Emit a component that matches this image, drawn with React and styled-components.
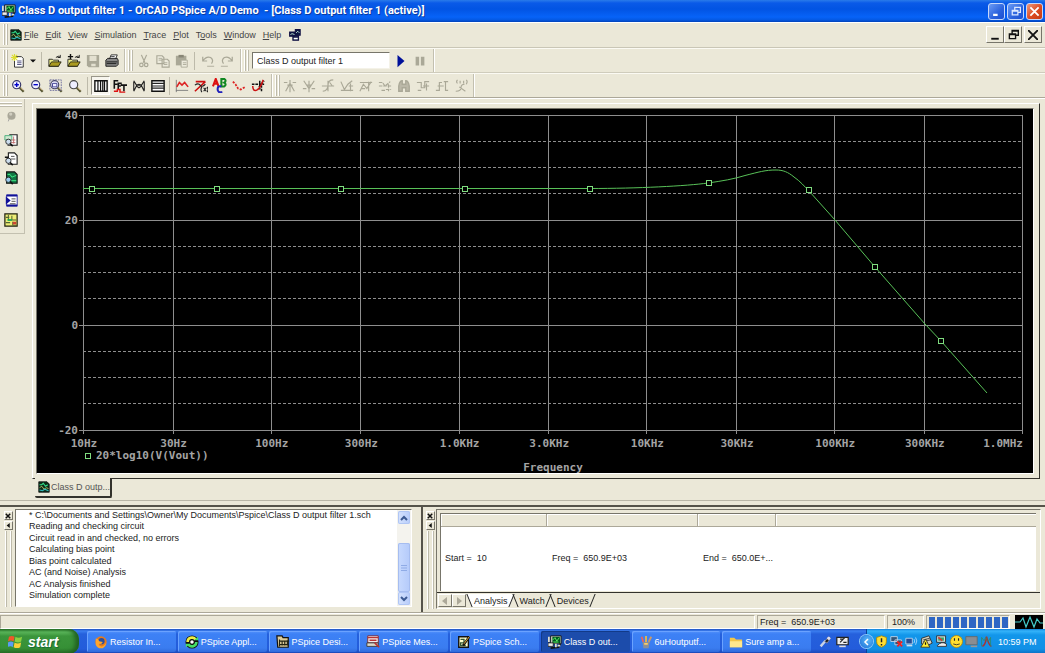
import React from 'react';
import styled, { createGlobalStyle, css } from 'styled-components';

const face = '#ebe8d8';
const shade = '#aca899';
const ink = '#222';
const sans = '"Liberation Sans", Arial, sans-serif';

const GlobalStyle = createGlobalStyle`
  * { box-sizing: border-box; }
  body { margin: 0; background: ${face}; font: 9px/12px ${sans}; color: ${ink}; }
  button { font: inherit; color: inherit; border: 0; padding: 0; background: none; }
  ul { list-style: none; margin: 0; padding: 0; }
`;

const Desktop = styled.div`
  display: flex;
  flex-direction: column;
  min-height: 100vh;
  overflow: hidden;
`;

const Svg = styled.svg`
  display: block;
  flex: none;
  width: ${p => p.$size || 13}px;
  height: ${p => p.$size || 13}px;
`;

const Icon = ({ size, children }) => (
  <Svg $size={size} viewBox="0 0 16 16" fill="none" aria-hidden="true">{children}</Svg>
);

/* ---------- icons ---------- */
const AppArt = () => (
  <>
    <path d="M3 1h12v9H3z" fill="#d8d8c8" stroke="#111" />
    <path d="M5 2h9v7H5z" fill="#052" />
    <path d="M5 6l3-3 2 4 3-4M6 8h6" stroke="#6f6" />
    <path d="M0 9h6v4H0z" fill="#eee" stroke="#222" />
    <path d="M3 15l9-1 2-4" stroke="#111" strokeWidth="2" />
    <path d="M1 2v6M9 10v4M11 12h3" stroke="#ddc" strokeWidth="2" />
  </>
);
const ScopeArt = () => (
  <>
    <path d="M1 1h11l3 3v11H1z" fill="#0b2d18" stroke="#111" />
    <path d="M2 5h3l2-2 3 4 3-2" stroke="#3d8" strokeWidth="1.5" />
    <path d="M2 9l3-2 3 4 3-2 3 1" stroke="#dd7" />
    <path d="M2 12l4 1 3-2 5 2" stroke="#3bb" strokeWidth="1.5" />
  </>
);
const Lens = ({ children, dim }) => (
  <>
    <circle cx="6.5" cy="6.5" r="4.6" fill="#eef" stroke={dim || '#336'} strokeWidth="1.3" />
    <path d="M10 10l4.5 4.5" stroke="#553" strokeWidth="2.6" />
    <path d="M11 10l3 3" stroke="#db8" />
    {children}
  </>
);
const Folder = () => (
  <>
    <path d="M1 6h4l1 1h6v7H1z" fill="#ee8" stroke="#222" />
    <path d="M1 14l3-5h11l-3 5z" fill="#aa9a20" stroke="#221" />
    <path d="M9 4q3-3 5 0M14 1v3h-3" stroke="#111" />
  </>
);
const g = '#aaa897';

const art = {
  newDoc: <><path d="M4 3h8l2 2v10H4z" fill="#fff" stroke="#222" /><path d="M7 8h5M7 10h5M7 12h5" stroke="#447" /><path d="M4 0v8M0 4h8M1 1l6 6M7 1L1 7" stroke="#dd3" strokeWidth="1.3" /></>,
  open: <Folder />,
  append: <><Folder /><path d="M4 0v6M1 3h6" stroke="#111" strokeWidth="1.6" /></>,
  save: <><path d="M1 1h14v14H3l-2-2z" fill={g} /><path d="M4 2h8v6H4zM6 11h5v3H6z" fill="#e3e0d0" /></>,
  print: <><path d="M5 6l2-5h7l-2 5" fill="#fff" stroke="#222" /><path d="M1 7l2-2h11l1 2v5l-2 2H1z" fill="#888" stroke="#111" /><path d="M2 9h12M2 11h11" stroke="#111" /><path d="M7 3h4" stroke="#222" /></>,
  cut: <><path d="M5 1l4 9M11 1L7 10" stroke={g} strokeWidth="1.4" /><circle cx="5" cy="12.5" r="2" stroke={g} strokeWidth="1.4" /><circle cx="10.5" cy="12.5" r="2" stroke={g} strokeWidth="1.4" /></>,
  copy: <><path d="M1 2h6l2 2v7H1zM7 6h6l2 2v7H7z" fill="#eceadc" stroke={g} strokeWidth="1.3" /><path d="M3 5h4M3 7h4M9 10h4M9 12h4" stroke={g} /></>,
  paste: <><path d="M1 2h12v11H1z" fill={g} /><path d="M4 1h6v3H4z" fill="#888676" /><path d="M7 7h7v8H7z" fill="#eceadc" stroke={g} /><path d="M9 10h4M9 12h4" stroke={g} /></>,
  undo: <><path d="M2 3v5h5M2 8q4-6 9-4 4 3 1 7" stroke={g} strokeWidth="1.4" /><path d="M7 14h8" stroke={g} /></>,
  redo: <><path d="M14 3v5H9M14 8q-4-6-9-4-4 3-1 7" stroke={g} strokeWidth="1.4" /><path d="M1 14h8" stroke={g} /></>,
  play: <path d="M4 1l8 7-8 7z" fill="#00109a" />,
  pause: <path d="M3 3h4v10H3zM9 3h4v10H9z" fill={g} />,
  zoomIn: <Lens><path d="M4 6.5h5M6.5 4v5" stroke="#00c" strokeWidth="1.6" /></Lens>,
  zoomOut: <Lens><path d="M4 6.5h5" stroke="#00c" strokeWidth="1.6" /></Lens>,
  zoomArea: <><Lens dim="#446"><path d="M4 5h5v4H4z" stroke="#338" /></Lens><path d="M1 1h13v12H1z" stroke="#669" strokeDasharray="2 1" /></>,
  zoomFit: <Lens dim="#444" />,
  logX: <><path d="M1 2h14v12H1z" fill="#fff" stroke="#111" strokeWidth="1.6" /><path d="M4.5 2v12M7.5 2v12M10 2v12M12 2v12" stroke="#111" strokeWidth="1.4" /></>,
  fft: <><path d="M1.5 11V2H6M1 6h4M6 12V5h4M6 8h3M9 7h7M12.5 7v7" stroke="#111" strokeWidth="1.8" /><path d="M1 14h4v-2h3v3h6" stroke="#d11" strokeWidth="1.6" /></>,
  perf: <><path d="M2 2l3 5 3-1 3 1 3-5M2 14l3-6 3 2 3-2 3 6M2 3v10M14 3v10M5 7h6" stroke="#222" strokeWidth="1.3" /></>,
  logY: <><path d="M1 2h14v12H1z" fill="#fff" stroke="#111" strokeWidth="1.6" /><path d="M1 5h14M1 8h14M1 10.5h14" stroke="#222" strokeWidth="1.4" /></>,
  trace: <><path d="M1.5 1v14M1 13h14" stroke="#777" /><path d="M2 9l3-5 3 3 3-3 4 5" stroke="#d22" strokeWidth="1.8" /></>,
  evalFn: <><path d="M2 3h11M1 14L13 3" stroke="#c11" strokeWidth="1.8" /><path d="M1 7q4-3 6 0t6-1M9 9q-2 3 0 6M11 10l3 4M14 10l-3 4M15 9q2 3 0 6" stroke="#222" strokeWidth="1.3" /></>,
  label: <><path d="M1 9l3-8 3 8M2 6h4" stroke="#d11" strokeWidth="2.2" /><path d="M10 1v8h3q3-2 0-4q3-2 0-4z" stroke="#182" strokeWidth="2.2" /><path d="M10 9q-4-1-4 3t5 3" stroke="#22b" strokeWidth="2.2" /></>,
  mark: <path d="M1 3l3 3 3 5 3 1 5-3" stroke="#d22" strokeWidth="2" strokeDasharray="2.5 1.5" />,
  cursor: <><path d="M1 6h14M10 2v10M9 9l6-7M12 7v7" stroke="#111" strokeWidth="1.7" strokeDasharray="3 1" /><path d="M2 8q0 6 4 5t8-12" stroke="#c11" strokeWidth="1.7" /></>,
  c1: <path d="M1 4h4M11 4h4M8 1v14M8 5L3 14M8 5l5 9M5 7h6" stroke={g} strokeWidth="1.3" />,
  c2: <path d="M2 2l6 9 6-9M8 2v13M1 11h4M11 11h4M5 7h6" stroke={g} strokeWidth="1.3" />,
  c3: <path d="M2 14q6-1 6-7t6-6M1 8h14M8 2v12M10 4l3 4" stroke={g} strokeWidth="1.3" />,
  c4: <path d="M1 3l4 9 4-6 5-4M1 13h14M12 5v9M10 8h5" stroke={g} strokeWidth="1.3" />,
  c5: <path d="M1 14l4-8 4 5 5-8M1 4h14M11 3v11M3 11h4" stroke={g} strokeWidth="1.3" />,
  c6: <path d="M1 4h4l3 4 6-5M1 8h14M4 13h4M12 6v8M9 12h6" stroke={g} strokeWidth="1.3" strokeDasharray="4 1" />,
  c7: <path d="M2 8q1-6 4-6v4h4V2q3 0 4 6v6h-4v-4H6v4H2z" stroke={g} fill="#bbb8a8" strokeWidth="1.5" />,
  c8: <path d="M1 4h5v6h4V3h5M8 8h7M12 5v8M2 13h4" stroke={g} strokeWidth="1.3" />,
  c9: <path d="M1 13h4V4h3M3 8h7M10 3h5M12 3v10h3" stroke={g} strokeWidth="1.3" />,
  c10: <path d="M4 1q-2 2 0 4M14 1q2 2 0 5M7 2v3M11 2v3M12 6q-4 0-4 4t-6 4M6 9l7 5" stroke={g} strokeWidth="1.3" />,
  pin: <><circle cx="8" cy="7" r="5" fill="#a9a799" /><circle cx="7" cy="5" r="2" fill="#d0cec0" /><path d="M5 11l-1 3" stroke="#999" /></>,
  view1: <><path d="M6 2h9v12H4" fill="#fff" stroke="#222" strokeWidth="1.3" /><path d="M1 3h8v5H1z" fill="#cfe8d0" stroke="#4a7" /><path d="M8 8h5M8 11h5M11 4v8" stroke="#b66" /><circle cx="5" cy="10" r="3" fill="#cde" stroke="#222" /><path d="M7 12l3 3" stroke="#111" strokeWidth="2" /></>,
  view2: <><path d="M5 1h7l3 3v10H5z" fill="#fff" stroke="#222" strokeWidth="1.3" /><path d="M8 5h4M8 8h5" stroke="#444" /><circle cx="5" cy="10" r="3" fill="#cde" stroke="#222" /><path d="M1 6h4M7 12l3 3" stroke="#111" strokeWidth="1.8" /></>,
  view3: <><path d="M3 1h9l3 3v10H3z" fill="#174" stroke="#111" strokeWidth="1.3" /><path d="M4 4h3l2 3 5-2M8 11h6" stroke="#4e8" /><circle cx="5" cy="10" r="3" fill="#9ce" stroke="#222" /><path d="M7 12l3 3" stroke="#111" strokeWidth="2" /></>,
  queue: <><path d="M2 1h13v14H2z" fill="#fff" stroke="#119" /><path d="M2 2h13M2 14h13" stroke="#119" strokeWidth="2" /><path d="M1 3l6 5-6 5z" fill="#119" /><path d="M8 6h5M8 9h5M6 12h7" stroke="#333" /></>,
  chip: <><path d="M1 1h14v14H1z" fill="#ee7" stroke="#221" strokeWidth="1.4" /><path d="M5 2v6M2 5h4M9 3v5h5M2 11h5M10 10v4h4" stroke="#563" strokeWidth="1.2" /><path d="M10 10h4v3h-4z" fill="#c43" /><path d="M4 8h5" stroke="#1a5" strokeWidth="2" /></>,
  windows: <><path d="M2 5h7v5H2zM9 2h6v7H9zM6 10h7v5H6z" fill="#0b1840" stroke="#114" strokeWidth="1.3" /><path d="M3 8l2-1 3 1M10 6l2-2 2 2" stroke="#dfe" /><path d="M7 13h5" stroke="#fff" strokeWidth="2" /></>,
  firefox: <><circle cx="8" cy="8" r="6.5" fill="#e77b1c" /><circle cx="8.5" cy="7" r="3.6" fill="#2a4fa0" /><path d="M2 4q3 0 4 3l4 1q-1 3-4 2-2 2 3 3 4-1 5-5 0 5-4 7-6 1-8-4z" fill="#ffa52b" /></>,
  recycle: <><circle cx="8" cy="8" r="7.5" fill="#111" /><path d="M3 8a5 5 0 019-3" stroke="#ee4" strokeWidth="3" /><path d="M13 8a5 5 0 01-9 3" stroke="#4d6" strokeWidth="3" /><path d="M10 6h5V2zM6 10H1v4z" fill="#4d6" /><circle cx="8" cy="8" r="2" fill="#fff" /></>,
  design: <><path d="M1 1h6l1 2h6v11H2z" fill="#dc9" stroke="#111" strokeWidth="1.4" /><path d="M4 7h11M4 11h10M4 5v8M7 7v5M10 7v5M13 6v6" stroke="#221" strokeWidth="1.3" /></>,
  message: <><path d="M2 1h12v8H2z" fill="#eee" stroke="#822" /><path d="M2 3h12M4 6h8" stroke="#b33" strokeWidth="1.6" /><path d="M1 9h13v4H1z" fill="#dcd8c8" stroke="#333" /><path d="M10 9l5 5" stroke="#b33" strokeWidth="2" /></>,
  sketch: <><path d="M2 2h11v12H2z" fill="#ffc" stroke="#111" strokeWidth="1.6" /><path d="M4 5h4v4H4v3h6" stroke="#353" strokeWidth="1.5" /><path d="M7 12l7-10" stroke="#111" strokeWidth="2.5" /><path d="M8 10l6-8" stroke="#fb3" /></>,
  brushes: <><path d="M4 8h8l-1 7H5z" fill="#8a8f99" /><path d="M5 8L3 2" stroke="#e65" strokeWidth="2" /><path d="M8 8V1" stroke="#eb4" strokeWidth="2" /><path d="M11 8l3-6" stroke="#c96" strokeWidth="2" /><path d="M6 10h4" stroke="#fc6" strokeWidth="2" /></>,
  folder: <><path d="M1 3h5l2 2h7v9H1z" fill="#f3c648" /><path d="M1 7h14v7H1z" fill="#ffe88d" /></>,
  pen: <><path d="M2 14l6-7" stroke="#c8d2e6" strokeWidth="3" /><path d="M7 8l5-6 2 2-4 6z" fill="#222" stroke="#99a" /><circle cx="12" cy="4" r="2" fill="#dde" /></>,
  tablet: <><path d="M1 3h14v9H1z" fill="#eee" stroke="#222" strokeWidth="1.5" /><path d="M5 9l6-6M5 5h4M9 9h4" stroke="#222" strokeWidth="1.5" /><path d="M4 14h8" stroke="#ddd" strokeWidth="2" /></>,
  shield: <><path d="M8 1l6 2v5q0 5-6 7-6-2-6-7V3z" fill="#fd3" stroke="#a80" /><path d="M8 4v5M8 11v2" stroke="#222" strokeWidth="1.8" /></>,
  netOff: <><path d="M1 2h8v6H1zM6 6h8v6H6z" fill="#357" stroke="#cde" /><path d="M9 8l6 6M15 8l-6 6" stroke="#e22" strokeWidth="2.2" /></>,
  netOn: <><path d="M1 4h8v7H1z" fill="#234e98" stroke="#cde" /><path d="M2 13h7" stroke="#cde" strokeWidth="2" /><path d="M11 5q2 2 0 5M13 3q3 4 0 9" stroke="#bdf" /></>,
  warn: <><path d="M2 4l9-3 4 9-6 3-7-2z" fill="#d8d4c0" stroke="#222" /><path d="M4 6l8-2M4 8l9-2" stroke="#333" /><path d="M7 5l5 10H1z" fill="#fe3" stroke="#332" /><path d="M6.8 9v3" stroke="#111" strokeWidth="1.5" /></>,
  screens: <><path d="M2 1h11v8H2z" fill="#cdd" stroke="#222" /><path d="M4 3h7v4H4z" fill="#3a6" /><path d="M4 3l5 4" stroke="#d33" strokeWidth="2" /><path d="M3 13q5-6 11-2v3H3z" fill="#eee" stroke="#222" /></>,
  smile: <><circle cx="8" cy="8" r="7.4" fill="#ffdf30" stroke="#b80" /><path d="M5.5 4v3M10.5 4v3" stroke="#222" strokeWidth="1.4" /><path d="M4 11q4 2 8 0" stroke="#222" /></>,
  monitor: <><path d="M1 2h14v10H1z" fill="#8a8d92" stroke="#666" /><path d="M7 14h8" stroke="#999" strokeWidth="2" /></>,
  scopeA: <><path d="M3 14q4-2 5-12 3 11 6 12" stroke="#a33" strokeWidth="1.8" /><path d="M2 14V3l3 4 2-4 3 5 3-5v11" stroke="#386" /></>,
};

/* ---------- title and menu ---------- */
const TitleBar = styled.header`
  display: flex;
  align-items: center;
  gap: 2px;
  height: 22px;
  padding: 0 2px;
  color: #fff;
  background: linear-gradient(#2a7bea 0, #0a5ae8 3px, #0254e3 9px, #0763f8 17px, #0458e2 20px, #0242b8 22px);
`;
const Title = styled.h1`
  flex: 1;
  margin: 0;
  font: bold 11px/20px Roboto, ${sans};
  white-space: pre;
  text-shadow: 1px 1px #0a3aa0;
`;
const Caption = styled.button`
  display: grid;
  place-items: center;
  width: 17px;
  height: 17px;
  border: 1px solid #c7d8fa;
  border-radius: 3px;
  background: ${p => (p.$close ? 'linear-gradient(135deg,#ee9a7c,#dc4a22 55%,#c43c14)' : 'linear-gradient(135deg,#6c9cf5,#2b62dd 60%,#1c4fd0)')};
`;
const Captions = styled.div`
  display: flex;
  gap: 2px;
`;
const MenuBar = styled.nav`
  display: flex;
  align-items: center;
  height: 26px;
  padding: 0 3px;
  border-bottom: 1px solid #c9c6b6;
  box-shadow: inset 0 1px #fff;
`;
const Menus = styled.div`
  display: flex;
  align-items: center;
  gap: 7px;
  flex: 1;
  margin-left: 2px;
`;
const MenuButton = styled.button`
  font: 9px/12px ${sans};
  color: #444;
`;
const MenuLead = styled.span`
  display: flex;
  align-items: center;
  gap: 2px;
`;
const ChildCaption = styled.button`
  display: grid;
  place-items: center;
  width: 18px;
  height: 17px;
  margin-left: ${p => (p.$gap ? 2 : 0)}px;
  border: 1px solid;
  border-color: #fff #77756a #77756a #fff;
`;

/* ---------- tool bars ---------- */
const ToolRow = styled.div`
  display: flex;
  height: 25px;
  border-top: 1px solid #fbfaf3;
  border-bottom: 1px solid ${p => (p.$last ? shade : '#cfccbc')};
`;
const Band = styled.div`
  display: flex;
  align-items: center;
  padding: 0 ${p => p.$end || 3}px 0 3px;
  border-right: 1px solid #c3c0b0;
  box-shadow: 1px 0 #fff;
`;
const Grip = styled.span`
  flex: none;
  width: 5px;
  height: 21px;
  margin-right: ${p => p.$gap || 0}px;
  background: linear-gradient(90deg, #fff 1px, #bdbaaa 1px 2px, transparent 2px 3px, #fff 3px 4px, #bdbaaa 4px);
`;
const Tool = styled.button`
  display: grid;
  place-items: center;
  width: ${p => p.$w || 19}px;
  height: 19px;
  ${p => p.$pressed && css`
    background: #f7f5ee;
    border: 1px solid;
    border-color: #99968a #fff #fff #99968a;
  `}
`;
const Separator = styled.span`
  width: 1px;
  height: 18px;
  margin: 0 ${p => p.$m || 3}px;
  background: #bdbaaa;
`;
const NameField = styled.input`
  width: 138px;
  height: 17px;
  margin-right: 1px;
  padding: 0 4px;
  border: 1px solid;
  border-color: #77756a #f4f2e8 #f4f2e8 #77756a;
  border-radius: 0;
  background: #fff;
  font: 9px/14px ${sans};
  color: ${ink};
`;

/* ---------- work area ---------- */
const Work = styled.main`
  display: flex;
  flex: 1;
  min-height: 0;
  border-top: 1px solid #fff;
  border-bottom: 1px solid #bab7a8;
`;
const SideBar = styled.div`
  display: flex;
  flex-direction: column;
  align-items: center;
  align-self: flex-start;
  width: 25px;
  height: 135px;
  padding: 3px 2px 0 0;
  border-right: 1px solid #c3c0b0;
  border-bottom: 1px solid #c3c0b0;
`;
const SideGrip = styled.span`
  width: 22px;
  height: 5px;
  background: linear-gradient(#fff 1px, #bdbaaa 1px 2px, transparent 2px 3px, #fff 3px 4px, #bdbaaa 4px);
`;
const SideTool = styled.button`
  display: grid;
  place-items: center;
  width: 19px;
  height: 19px;
  margin-bottom: ${p => p.$gap || 0}px;
`;
const Child = styled.section`
  display: flex;
  flex-direction: column;
  flex: 1;
  min-width: 0;
  padding: 4px 5px 2px 7px;
`;
const Frame = styled.div`
  display: flex;
  flex: 1;
  min-height: 0;
  padding: 4px 5px 4px 3px;
  border: 1px solid;
  border-color: #fff #33322c #33322c #fff;
`;
const Plot = styled.svg`
  display: block;
  flex: 1;
  min-width: 0;
  height: 366px;
  background: #000;
  border: 1px solid;
  border-color: #77756a #fff #fff #77756a;
`;
const PlotText = styled.text`
  font: bold 11px "DejaVu Sans Mono", monospace;
  fill: #a4a4a4;
  text-anchor: ${p => p.$anchor || 'start'};
`;
const SheetTabs = styled.div`
  display: flex;
  margin-top: -1px;
  padding-left: 3px;
`;
const SheetTab = styled.button`
  display: flex;
  align-items: center;
  gap: 1px;
  height: 20px;
  padding: 0 0 0 3px;
  background: ${face};
  border-right: 2px solid #33322c;
  border-bottom: 2px solid #33322c;
  border-radius: 0 0 2px 2px;
  color: #555;
`;

const X = f => 46 + Math.log10(f / 10) * 187.8;
const Y = db => 6 + (40 - db) * 5.25;
const ticks = [
  [10, '10Hz'], [30, '30Hz'], [100, '100Hz'], [300, '300Hz'], [1e3, '1.0KHz'], [3e3, '3.0KHz'],
  [1e4, '10KHz'], [3e4, '30KHz'], [1e5, '100KHz'], [3e5, '300KHz'], [1e6, '1.0MHz'],
];
const minors = [35, 30, 25, 15, 10, 5, -5, -10, -15];
const samples = [[54, 79], [179, 79], [303, 79], [427, 79], [552, 79], [671, 73], [771, 80], [837, 157], [903, 231]];

const Bode = () => (
  <Plot viewBox="0 0 996 364" preserveAspectRatio="none" role="img" aria-label="20*log10(V(Vout)) against frequency">
    <g shapeRendering="crispEdges" stroke="#8e8e8e">
      {minors.map(v => <path key={v} d={`M46 ${Math.floor(Y(v)) + 0.5}H985`} strokeDasharray="3 2" />)}
      {ticks.map(([f]) => <path key={f} d={`M${Math.round(X(f)) + 0.5} 6V325`} />)}
      {[40, 20, 0, -20].map(v => <path key={v} d={`M42 ${Math.floor(Y(v)) + 0.5}H985`} />)}
    </g>
    <path
      d="M46 79.5H553C600 79.5 650 77 671 74C685 72 697 70 708 66.5C722 63 728 61 739 61C746 61 751 63 757 68C763 72 768 78 772 82L798 111L838 158L888 215L904 232L950 284"
      fill="none" stroke="#58c158"
    />
    {samples.map(([x, y]) => (
      <rect key={x} x={x - 1.5} y={y - 1.5} width="5" height="5" fill="#000" stroke="#7fdc7f" />
    ))}
    {[40, 20, 0, -20].map(v => <PlotText key={v} x="41" y={Y(v) + 4} $anchor="end">{v}</PlotText>)}
    {ticks.map(([f, t]) => (
      <PlotText key={f} x={f === 1e6 ? 986 : X(f) + 1} y="338" $anchor={f === 1e6 ? 'end' : 'middle'}>{t}</PlotText>
    ))}
    <rect x="48.5" y="344.5" width="5" height="5" fill="none" stroke="#7fdc7f" />
    <PlotText x="59" y="350">20*log10(V(Vout))</PlotText>
    <PlotText x="516" y="362" $anchor="middle">Frequency</PlotText>
  </Plot>
);

/* ---------- docked panes ---------- */
const Docks = styled.div`
  display: grid;
  grid-template-columns: minmax(0, 421fr) minmax(0, 624fr);
  grid-template-rows: minmax(0, 1fr);
  height: 108px;
  margin-top: 4px;
  border-top: 2px solid #55534a;
  border-bottom: 1px solid ${shade};
`;
const Dock = styled.section`
  display: flex;
  gap: ${p => (p.$divided ? 1 : 2)}px;
  padding: ${p => (p.$divided ? '2px 4px 3px 2px' : '2px 9px 5px 3px')};
  border-left: ${p => (p.$divided ? '2px solid #55534a' : '0')};
`;
const DockHandle = styled.div`
  display: flex;
  flex-direction: column;
  align-items: center;
  gap: 1px;
  width: 10px;
  padding-top: 2px;
`;
const MiniButton = styled.button`
  display: grid;
  place-items: center;
  width: 9px;
  height: 9px;
  border: 1px solid;
  border-color: #fff #77756a #77756a #fff;
`;
const DockRidges = styled.span`
  flex: 1;
  width: 7px;
  background: linear-gradient(90deg, #fff 1px, #bdbaaa 1px 2px, transparent 2px 5px, #fff 5px 6px, #bdbaaa 6px);
`;
const Output = styled.div`
  display: flex;
  flex: 1;
  min-width: 0;
  background: #fff;
  border: 1px solid;
  border-color: #77756a #fff #fff #77756a;
`;
const Log = styled.ul`
  display: flex;
  flex-direction: column;
  justify-content: space-between;
  flex: 1;
  padding: 0 0 5px 13px;
  line-height: 11px;
  white-space: nowrap;
  overflow: hidden;
`;
const Scroll = styled.div`
  display: flex;
  flex-direction: column;
  width: 14px;
  padding: 1px;
  background: #f4f3ee;
`;
const ScrollButton = styled.button`
  display: grid;
  place-items: center;
  height: 13px;
  border-radius: 2px;
  background: linear-gradient(90deg, #d6e3fd, #b7ccfa);
  box-shadow: inset 0 0 0 1px #b0c6f5;
`;
const Thumb = styled.div`
  display: grid;
  place-items: center;
  height: 49px;
  margin-top: auto;
  border-radius: 2px;
  background: linear-gradient(90deg, #c8dafe, #b4cafa);
  box-shadow: inset 0 0 0 1px #a6bdf0;
`;
const Results = styled.div`
  display: flex;
  flex-direction: column;
  flex: 1;
  min-width: 0;
  border: 1px solid;
  border-color: #77756a #fff #fff #77756a;
`;
const TableBox = styled.div`
  flex: 1;
  margin: 3px 4px 1px 3px;
  background: #fff;
  border-top: 1px solid #77756a;
  border-left: 1px solid #77756a;
`;
const Grid = styled.table`
  width: 100%;
  table-layout: fixed;
  border-collapse: separate;
  border-spacing: 0;
  th {
    height: 13px;
    padding: 0;
    background: ${face};
    border-right: 1px solid ${shade};
    border-bottom: 1px solid ${shade};
    box-shadow: inset 1px 1px #fff;
  }
  th:last-child { border-right: 0; }
  td {
    height: 61px;
    padding: 0 5px;
    white-space: pre;
  }
  td:first-child { padding-left: 4px; }
`;
const PaneTabs = styled.div`
  display: flex;
  height: 16px;
  padding: 1px 0 0 1px;
  border-top: 1px solid #33322c;
`;
const NavButton = styled.button`
  display: grid;
  place-items: center;
  width: 14px;
  height: 13px;
  border: 1px solid;
  border-color: #fff #77756a #77756a #fff;
`;
const PaneTab = styled.button`
  position: relative;
  height: 13px;
  margin-left: ${p => (p.$active ? 2 : 0)}px;
  padding: 0 6px;
  isolation: isolate;
  &::before, &::after {
    content: '';
    position: absolute;
    z-index: -1;
    top: 0;
    bottom: 0;
    background: ${p => (p.$active ? '#fff' : 'transparent')};
  }
  &::before { left: 1px; right: 40%; transform: skewX(22deg); border-left: 1px solid #222; }
  &::after { left: 40%; right: 1px; transform: skewX(-22deg); border-right: 1px solid #222; }
`;

/* ---------- status bar ---------- */
const StatusBar = styled.footer`
  display: flex;
  gap: 2px;
  height: 16px;
  padding: 1px 2px 0 0;
  border-top: 1px solid #fff;
  font: 9px/13px ${sans};
`;
const Cell = styled.div`
  flex: ${p => (p.$w ? `0 0 ${p.$w}px` : 1)};
  padding-left: ${p => p.$pad || 2}px;
  border: 1px solid;
  border-color: ${shade} #fff #fff ${shade};
  white-space: pre;
`;
const Progress = styled(Cell)`
  display: flex;
  gap: 2px;
  padding: 1px 1px 0 2px;
`;
const Block = styled.span`
  flex: 1;
  background: #2e66c4;
`;
const Wave = styled.svg`
  width: 28px;
  height: 14px;
  margin-left: 3px;
  background: #000;
`;

/* ---------- task bar ---------- */
const TaskBar = styled.div`
  display: flex;
  height: 25px;
  color: #fff;
  font: 9px/14px ${sans};
  background: linear-gradient(#1f50c0 0, #3b7ef0 2px, #2560dc 5px, #235cdb 20px, #1a45b0 25px);
`;
const Start = styled.button`
  display: flex;
  align-items: center;
  gap: 5px;
  width: 79px;
  padding-left: 8px;
  border-radius: 0 10px 10px 0;
  font: italic bold 14px/20px ${sans};
  color: #fff;
  text-shadow: 1px 1px 1px #163;
  background: linear-gradient(#2a7a2a 0, #5cb85c 3px, #3b953b 7px, #369036 19px, #256a25 25px);
  box-shadow: inset -4px 0 4px #216121;
`;
const Tasks = styled.div`
  display: flex;
  flex: 1;
  gap: 2px;
  min-width: 0;
  padding: 2px 0 2px 8px;
`;
const Task = styled.button`
  display: flex;
  align-items: center;
  gap: 2px;
  flex: 1;
  min-width: 0;
  padding-left: 7px;
  border-radius: 2px;
  white-space: nowrap;
  overflow: hidden;
  background: ${p => (p.$active ? '#1c4cab' : 'linear-gradient(#5592fb 0, #3d81f6 3px, #3a7cf0 17px, #2f6bdc 21px)')};
  box-shadow: inset 1px 1px ${p => (p.$active ? '#123a88' : '#6aa2ff')};
`;
const Quick = styled.div`
  display: flex;
  align-items: center;
  gap: 4px;
  width: 55px;
  padding-left: 8px;
`;
const Tray = styled.div`
  display: flex;
  align-items: center;
  gap: 2px;
  width: 179px;
  background: linear-gradient(#0f7fd8 0, #35b4fa 2px, #1296ea 6px, #1290e6 20px, #0c6cc0 25px);
  border-left: 1px solid #0b3f96;
`;
const Chevron = styled.button`
  display: grid;
  place-items: center;
  flex: none;
  width: 13px;
  height: 13px;
  margin-left: -7px;
  border-radius: 50%;
  background: radial-gradient(circle at 60% 40%, #5ab6f8, #1a6fd6);
  box-shadow: 0 0 0 1px #8cc8f8;
`;
const Clock = styled.time`
  margin-left: 3px;
  white-space: nowrap;
`;

const Arrow = ({ d, size = 8, color = '#111', w = 2 }) => (
  <Svg $size={size} viewBox="0 0 8 8" fill="none" stroke={color} strokeWidth={w} aria-hidden="true"><path d={d} /></Svg>
);
const Triangle = ({ d, size = 8, color = '#111' }) => (
  <Svg $size={size} viewBox="0 0 8 8" fill={color} aria-hidden="true"><path d={d} /></Svg>
);

const tool = names => names.map(([n, label]) => (
  <Tool key={n} aria-label={label} $pressed={n === 'logX'}><Icon size={n === 'label' ? 15 : 14}>{art[n]}</Icon></Tool>
));

const menus = [['', 'E', 'dit'], ['', 'V', 'iew'], ['', 'S', 'imulation'], ['', 'T', 'race'], ['', 'P', 'lot'], ['T', 'o', 'ols'], ['', 'W', 'indow'], ['', 'H', 'elp']];
const log = [
  '* C:\\Documents and Settings\\Owner\\My Documents\\Pspice\\Class D output filter 1.sch',
  'Reading and checking circuit', 'Circuit read in and checked, no errors', 'Calculating bias point',
  'Bias point calculated', 'AC (and Noise) Analysis', 'AC Analysis finished', 'Simulation complete',
];
const tasks = [
  ['firefox', 'Resistor In...'], ['recycle', 'PSpice Appl...'], ['design', 'PSpice Desi...'], ['message', 'PSpice Mes...'],
  ['sketch', 'PSpice Sch...'], ['app', 'Class D out...'], ['brushes', '6uHoutputf...'], ['folder', 'Sure amp a...'],
];

const Handle = () => (
  <DockHandle>
    <MiniButton aria-label="Close pane"><Arrow size={6} d="M1 1l6 6M7 1L1 7" /></MiniButton>
    <MiniButton aria-label="Collapse pane"><Triangle size={5} d="M6 0L1 4l5 4z" /></MiniButton>
    <DockRidges />
  </DockHandle>
);

export default function App() {
  return (
    <Desktop>
      <GlobalStyle />
      <TitleBar>
        <Icon size={14}><AppArt /></Icon>
        <Title>{'Class D output filter 1 - OrCAD PSpice A/D Demo  - [Class D output filter 1 (active)]'}</Title>
        <Captions>
          <Caption aria-label="Minimize"><Arrow size={9} color="#fff" d="M1 7h4" /></Caption>
          <Caption aria-label="Restore"><Arrow size={10} color="#dce8ff" w={1} d="M3 3V1h4.500v4H6M1 3.500h4.500v3.500H1zM1 4h4" /></Caption>
          <Caption $close aria-label="Close"><Arrow size={11} color="#fff" w={1.3} d="M1 1l6 6M7 1L1 7" /></Caption>
        </Captions>
      </TitleBar>

      <MenuBar>
        <Grip />
        <Menus>
          <MenuLead>
            <Icon size={12}><ScopeArt /></Icon>
            <MenuButton><u>F</u>ile</MenuButton>
          </MenuLead>
          {menus.map(([a, u, b]) => (
            <MenuButton key={b}>{a}<u>{u}</u>{b}</MenuButton>
          ))}
          <Icon size={13}>{art.windows}</Icon>
        </Menus>
        <ChildCaption aria-label="Minimize chart"><Arrow size={10} w={1.5} d="M1 7h6" /></ChildCaption>
        <ChildCaption aria-label="Restore chart"><Arrow size={11} w={1} d="M3 3V1h4.500v3.500H6M1 3.500h4.500v3.500H1zM1 4h4M3 1.500h4" /></ChildCaption>
        <ChildCaption $gap aria-label="Close chart"><Arrow size={10} w={1.5} d="M0 0l8 8M8 0L0 8" /></ChildCaption>
      </MenuBar>

      <ToolRow>
        <Band>
          <Grip />
          {tool([['newDoc', 'New']])}
          <Tool $w={11} aria-label="New options"><Triangle size={6} d="M0 2h8L4 6z" /></Tool>
          <Separator />
          {tool([['open', 'Open'], ['append', 'Append'], ['save', 'Save'], ['print', 'Print']])}
        </Band>
        <Band $end={4}>
          <Grip $gap={1} />
          {tool([['cut', 'Cut'], ['copy', 'Copy'], ['paste', 'Paste']])}
          <Separator />
          {tool([['undo', 'Undo'], ['redo', 'Redo']])}
        </Band>
        <Band $end={4}>
          <Grip $gap={3} />
          <NameField aria-label="Simulation profile" defaultValue="Class D output filter 1" />
          {tool([['play', 'Run'], ['pause', 'Pause']])}
        </Band>
      </ToolRow>
      <ToolRow $last>
        <Band $end={4}>
          <Grip />
          {tool([['zoomIn', 'Zoom in'], ['zoomOut', 'Zoom out'], ['zoomArea', 'Zoom area'], ['zoomFit', 'Zoom fit']])}
          <Separator />
          {tool([['logX', 'Log X axis'], ['fft', 'Fourier'], ['perf', 'Performance'], ['logY', 'Log Y axis']])}
          <Separator $m={2} />
          {tool([['trace', 'Add trace'], ['evalFn', 'Evaluate'], ['label', 'Text label'], ['mark', 'Mark points'], ['cursor', 'Toggle cursor']])}
        </Band>
        <Band>
          <Grip />
          {tool([['c1', 'Peak'], ['c2', 'Trough'], ['c3', 'Slope'], ['c4', 'Min'], ['c5', 'Max'], ['c6', 'Point'], ['c7', 'Search'], ['c8', 'Next transition'], ['c9', 'Previous transition'], ['c10', 'Mark label']])}
        </Band>
      </ToolRow>

      <Work>
        <SideBar>
          <SideGrip />
          <SideTool $gap={4} aria-label="Pin"><Icon>{art.pin}</Icon></SideTool>
          <SideTool aria-label="Edit profile"><Icon size={14}>{art.view1}</Icon></SideTool>
          <SideTool aria-label="View output"><Icon size={14}>{art.view2}</Icon></SideTool>
          <SideTool $gap={4} aria-label="View results"><Icon size={14}>{art.view3}</Icon></SideTool>
          <SideTool aria-label="Simulation queue"><Icon>{art.queue}</Icon></SideTool>
          <SideTool aria-label="Circuit"><Icon size={14}>{art.chip}</Icon></SideTool>
        </SideBar>
        <Child>
          <Frame><Bode /></Frame>
          <SheetTabs>
            <SheetTab><Icon size={12}><ScopeArt /></Icon>Class D outp...</SheetTab>
          </SheetTabs>
        </Child>
      </Work>

      <Docks>
        <Dock>
          <Handle />
          <Output>
            <Log>{log.map(l => <li key={l}>{l}</li>)}</Log>
            <Scroll>
              <ScrollButton aria-label="Scroll up"><Arrow size={8} color="#3c5a92" d="M1 6l3-3 3 3" /></ScrollButton>
              <Thumb><Arrow size={8} color="#8fabe6" w={1} d="M1 1.500h6M1 4h6M1 6.500h6" /></Thumb>
              <ScrollButton aria-label="Scroll down"><Arrow size={8} color="#3c5a92" d="M1 2l3 3 3-3" /></ScrollButton>
            </Scroll>
          </Output>
        </Dock>
        <Dock $divided>
          <Handle />
          <Results>
            <TableBox>
              <Grid>
                <colgroup><col width="106" /><col width="151" /><col width="78" /><col /></colgroup>
                <thead><tr><th scope="col" /><th scope="col" /><th scope="col" /><th scope="col" /></tr></thead>
                <tbody><tr><td>{'Start =  10'}</td><td>{'Freq =  650.9E+03'}</td><td>{'End =  650.0E+...'}</td><td /></tr></tbody>
              </Grid>
            </TableBox>
            <PaneTabs>
              <NavButton aria-label="Previous tab"><Triangle d="M6 0v8L1 4z" color={shade} /></NavButton>
              <NavButton aria-label="Next tab"><Triangle d="M2 0v8l5-4z" color={shade} /></NavButton>
              <PaneTab $active>Analysis</PaneTab>
              <PaneTab>Watch</PaneTab>
              <PaneTab>Devices</PaneTab>
            </PaneTabs>
          </Results>
        </Dock>
      </Docks>

      <StatusBar>
        <Cell />
        <Cell $w={128}>{'Freq =  650.9E+03'}</Cell>
        <Cell $w={37} $pad={4}>100%</Cell>
        <Progress $w={84}>{Array.from({ length: 10 }, (_, i) => <Block key={i} />)}</Progress>
        <Wave viewBox="0 0 28 14" aria-hidden="true"><path d="M0 7h5l3-4 3 9 4-10 4 10 3-8 3 4h3" fill="none" stroke="#4cc" strokeWidth="1.2" /></Wave>
      </StatusBar>

      <TaskBar>
        <Start>
          <Icon size={15}>
            <path d="M1 3q3-2 6 0L6 8Q3 6 0 8z" fill="#f0572a" />
            <path d="M8 3q3 2 7 0l-1 5q-3 2-7 0z" fill="#8cd040" />
            <path d="M0 9q3-2 6 0l-1 5Q3 12-1 14z" fill="#5a9cf5" />
            <path d="M7 9q3 2 7 0l-1 5q-3 2-7 0z" fill="#fbd038" />
          </Icon>
          start
        </Start>
        <Tasks>
          {tasks.map(([n, t]) => (
            <Task key={t} $active={n === 'app'}><Icon size={14}>{n === 'app' ? <AppArt /> : art[n]}</Icon>{t}</Task>
          ))}
        </Tasks>
        <Quick>
          <Icon>{art.pen}</Icon>
          <Icon>{art.tablet}</Icon>
        </Quick>
        <Tray>
          <Chevron aria-label="Show hidden icons"><Arrow size={8} color="#fff" w={1.5} d="M5 1L2 4l3 3" /></Chevron>
          {['shield', 'netOff', 'netOn', 'warn', 'screens', 'smile', 'monitor', 'scopeA'].map(n => <Icon key={n}>{art[n]}</Icon>)}
          <Clock>10:59 PM</Clock>
        </Tray>
      </TaskBar>
    </Desktop>
  );
}
